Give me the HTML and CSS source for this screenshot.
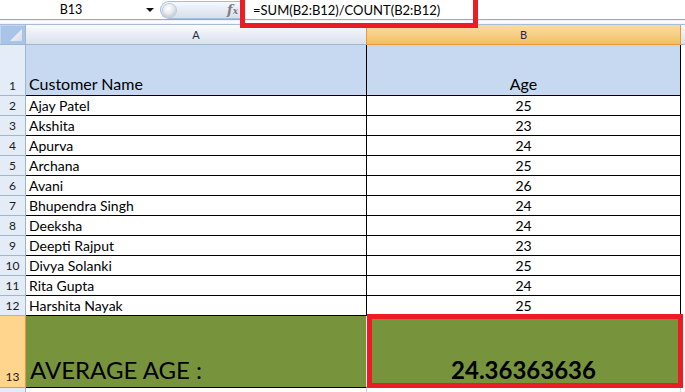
FILE: index.html
```html
<!DOCTYPE html>
<html>
<head>
<meta charset="utf-8">
<link rel="stylesheet" href="styles.css">
</head>
<body>
<div class="app">
  <div class="toolbar">
    <div class="namebox"><span class="ref">B13</span><span class="arrow"></span></div>
    <div class="pill"><span class="knob"></span><span class="fx"><i>f</i><span class="fxx">x</span></span></div>
    <div class="formula">=SUM(B2:B12)/COUNT(B2:B12)</div>
    <div class="annot annot-formula"></div>
  </div>
  <div class="sep"></div>
  <div class="sheet">
    <div class="corner"><svg width="12" height="12" viewBox="0 0 12 12"><defs><linearGradient id="tg" x1="0" y1="0" x2="1" y2="1"><stop offset="0" stop-color="#ffffff"/><stop offset="1" stop-color="#d4dbe6"/></linearGradient></defs><polygon points="12,0 12,12 0,12" fill="url(#tg)"/></svg></div>
    <div class="colhead ch-a">A</div>
    <div class="colhead ch-b">B</div>
    <div class="colhead ch-rest"></div>

    <div class="rh rh-tall">1</div>
    <div class="c a head hl">Customer Name</div>
    <div class="c b head hl">Age</div>
    <div class="rest"></div>

    <div class="rh">2</div><div class="c a">Ajay Patel</div><div class="c b">25</div><div class="rest"></div>
    <div class="rh">3</div><div class="c a">Akshita</div><div class="c b">23</div><div class="rest"></div>
    <div class="rh">4</div><div class="c a">Apurva</div><div class="c b">24</div><div class="rest"></div>
    <div class="rh">5</div><div class="c a">Archana</div><div class="c b">25</div><div class="rest"></div>
    <div class="rh">6</div><div class="c a">Avani</div><div class="c b">26</div><div class="rest"></div>
    <div class="rh">7</div><div class="c a">Bhupendra Singh</div><div class="c b">24</div><div class="rest"></div>
    <div class="rh">8</div><div class="c a">Deeksha</div><div class="c b">24</div><div class="rest"></div>
    <div class="rh">9</div><div class="c a">Deepti Rajput</div><div class="c b">23</div><div class="rest"></div>
    <div class="rh">10</div><div class="c a">Divya Solanki</div><div class="c b">25</div><div class="rest"></div>
    <div class="rh">11</div><div class="c a">Rita Gupta</div><div class="c b">24</div><div class="rest"></div>
    <div class="rh">12</div><div class="c a">Harshita Nayak</div><div class="c b">25</div><div class="rest"></div>

    <div class="rh rh-sel">13</div>
    <div class="c a avg">AVERAGE AGE :</div>
    <div class="c b avgval">24.36363636<div class="annot annot-cell"></div></div>
    <div class="rest"></div>

    <div class="rh rh-empty"></div>
    <div class="c a empty"></div>
    <div class="c b empty"></div>
    <div class="rest"></div>
  </div>
</div>
</body>
</html>
```
FILE: styles.css
```css
html, body {
  margin: 0;
  padding: 0;
  background: #ffffff;
  overflow: hidden;
}
.app {
  width: 685px;
  height: 392px;
  font-family: Lato, "Liberation Sans", sans-serif;
  color: #000;
  overflow: hidden;
}
.toolbar {
  position: relative;
  height: 19px;
  display: flex;
  background: #ffffff;
}
.namebox {
  width: 160px;
  display: flex;
  align-items: center;
  position: relative;
}
.ref {
  width: 142px;
  text-align: center;
  font-size: 12.5px;
  line-height: 19px;
}
.arrow {
  width: 0;
  height: 0;
  border-left: 4px solid transparent;
  border-right: 4px solid transparent;
  border-top: 4px solid #111;
  margin-left: 4px;
  margin-top: 1px;
}
.pill {
  box-sizing: border-box;
  margin-top: 1px;
  width: 82px;
  height: 18px;
  border: 1px solid #a9bdd8;
  border-right: 0;
  border-radius: 9px 0 0 9px;
  background: linear-gradient(#f7f9fc, #e3eaf3 55%, #d6e0ed);
  display: flex;
  align-items: center;
  justify-content: space-between;
  padding-left: 2px;
  padding-right: 3px;
}
.knob {
  width: 13px;
  height: 13px;
  border-radius: 50%;
  background: radial-gradient(circle at 40% 35%, #ffffff 0%, #e6e9ee 45%, #a9b1bd 100%);
  box-shadow: 0 0 0 1px #c2ccd9;
}
.fx {
  font-family: "DejaVu Serif", "Liberation Serif", serif;
  font-style: italic;
  font-weight: bold;
  color: #7d7d7d;
  font-size: 13px;
  line-height: 16px;
  margin-right: 1px;
}
.fx i {
  font-style: italic;
}
.fxx {
  font-size: 9px;
}
.formula {
  flex: 1;
  padding-left: 11px;
  font-size: 13px;
  line-height: 19px;
  padding-top: 1px;
  white-space: nowrap;
}
.annot {
  position: absolute;
  box-sizing: border-box;
  border: 5px solid #ed1c24;
  pointer-events: none;
}
.annot-formula {
  left: 240px;
  top: -5px;
  width: 238px;
  height: 33px;
}
.sep {
  height: 6px;
  box-sizing: border-box;
  border-top: 1px solid #8fabd1;
  border-bottom: 1px solid #a7bcd9;
  background: linear-gradient(#e4ebf5, #ffffff 40%, #eef2f8);
}
.sheet {
  display: grid;
  grid-template-columns: 26px 341px 314px 4px;
  grid-template-rows: 20px 51px repeat(11, 20px) 72px 20px;
}
.corner {
  box-sizing: border-box;
  background: #a9c4e9;
  border-right: 1px solid #9eb6ce;
  border-bottom: 1px solid #9eb6ce;
  box-shadow: inset 1px 1px 0 #c4d6ee;
  display: flex;
  align-items: flex-end;
  justify-content: flex-end;
  padding: 0 3px 3px 0;
}
.colhead {
  box-sizing: border-box;
  text-align: center;
  font-size: 11px;
  line-height: 19px;
  color: #1b2a3e;
}
.ch-a {
  background: linear-gradient(#f9fbfd, #e6ebf2 60%, #d9e1ec);
  border-bottom: 1px solid #9eb6ce;
  border-right: 1px solid #f29536;
}
.ch-b {
  background: linear-gradient(#f9dca4, #f6cf85 50%, #f1c15f);
  border-bottom: 1px solid #f29536;
  border-right: 1px solid #f29536;
}
.ch-rest {
  background: linear-gradient(#f9fbfd, #e6ebf2 60%, #d9e1ec);
  border-bottom: 1px solid #9eb6ce;
}
.rh {
  box-sizing: border-box;
  background: #e4ecf7;
  border-right: 1px solid #9eb6ce;
  border-bottom: 1px solid #9eb6ce;
  font-size: 12px;
  line-height: 14px;
  text-align: center;
  display: flex;
  align-items: flex-end;
  justify-content: center;
  padding-bottom: 2px;
  color: #1a1a1a;
}
.rh-sel {
  background: #ffd58d;
  border-right: 1px solid #f29536;
  border-bottom: 1px solid #f29536;
  padding-bottom: 3px;
}
.c {
  box-sizing: border-box;
  border-right: 1px solid #000;
  border-bottom: 1px solid #000;
  display: flex;
  align-items: flex-end;
  font-size: 14px;
  line-height: 1.2;
  white-space: nowrap;
}
.a {
  padding-left: 3px;
}
.b {
  justify-content: center;
}
.hl {
  background: #c6d9f1;
}
.head {
  font-size: 16px;
  padding-bottom: 2px;
}
.avg {
  background: #77933c;
  border-right: 1px solid #ebe9fb;
  font-size: 24px;
  padding-left: 4px;
  padding-bottom: 2px;
}
.avgval {
  position: relative;
  background: #77933c;
  font-size: 24px;
  font-weight: bold;
  padding-bottom: 2px;
}
.annot-cell {
  left: 0;
  top: -2px;
  width: 316px;
  height: 74px;
}
.empty {
  border-right: 1px solid #d0d7e5;
  border-bottom: 0;
}
.rest {
  background: #ffffff;
}
```
